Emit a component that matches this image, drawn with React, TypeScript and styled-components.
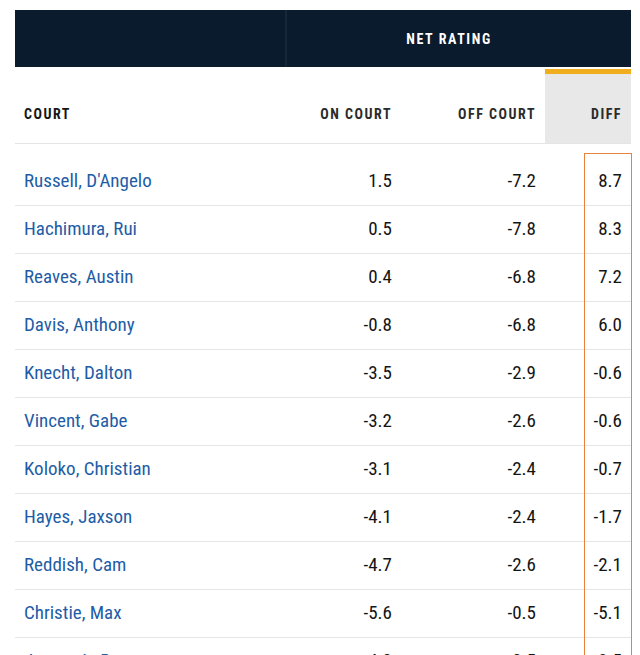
import React from "react";
import styled, { createGlobalStyle } from "styled-components";

const GlobalStyle = createGlobalStyle`
  html, body { margin: 0; padding: 0; background: #ffffff; }
  body { font-family: "Roboto Condensed", Roboto, "Liberation Sans", sans-serif; }
  * { box-sizing: border-box; }
`;

const Page = styled.div`
  width: 640px;
  height: 655px;
  overflow: hidden;
  padding: 10px 9px 0 15px;
`;

const COLS = "272px 114px 144px 86px";

const TopBar = styled.div`
  display: grid;
  grid-template-columns: 272px 1fr;
  height: 57px;
  background: #0a1b2d;
`;

const TopSpacer = styled.div`
  border-right: 2px solid #16273a;
`;

const GroupTitle = styled.div`
  display: flex;
  align-items: center;
  justify-content: center;
  padding-right: 20px;
  color: #ffffff;
  font-weight: 700;
  font-size: 14px;
  letter-spacing: 1.6px;
`;

const HeadRow = styled.div`
  display: grid;
  grid-template-columns: ${COLS};
  height: 76px;
  margin-top: 1px;
  border-bottom: 1px solid #e4e4e4;
`;

const HeadCell = styled.div<{ $align?: "left" | "right"; $active?: boolean }>`
  display: flex;
  align-items: center;
  justify-content: ${(p) => (p.$align === "left" ? "flex-start" : "flex-end")};
  padding: ${(p) => (p.$align === "left" ? "10px 0 0 9px" : "10px 9px 0 0")};
  font-weight: 700;
  font-size: 14px;
  letter-spacing: 1.5px;
  color: ${(p) => (p.$align === "left" ? "#161616" : "#2b2b2b")};
  background: ${(p) => (p.$active ? "#e8e8e8" : "transparent")};
  border-top: 5px solid ${(p) => (p.$active ? "#f0ae1e" : "transparent")};
  margin-top: 1px;
`;

const Body = styled.div`
  position: relative;
  padding-top: 14px;
`;

const Highlight = styled.div`
  position: absolute;
  top: 9px;
  right: -1px;
  bottom: -40px;
  width: 48px;
  border: 1.5px solid #e8813a;
  pointer-events: none;
`;

const Row = styled.div`
  display: grid;
  grid-template-columns: ${COLS};
  height: 48px;
  border-bottom: 1px solid #e6e6e6;
`;

const NameCell = styled.div`
  display: flex;
  align-items: center;
  padding-left: 9px;
  padding-bottom: 2px;
  font-size: 19px;
  color: #1e5da6;
  white-space: nowrap;
`;

const NumCell = styled.div`
  display: flex;
  align-items: center;
  justify-content: flex-end;
  padding-right: 9px;
  padding-bottom: 2px;
  font-size: 19px;
  color: #141414;
`;

type Player = { name: string; on: string; off: string; diff: string };

const players: Player[] = [
  { name: "Russell, D'Angelo", on: "1.5", off: "-7.2", diff: "8.7" },
  { name: "Hachimura, Rui", on: "0.5", off: "-7.8", diff: "8.3" },
  { name: "Reaves, Austin", on: "0.4", off: "-6.8", diff: "7.2" },
  { name: "Davis, Anthony", on: "-0.8", off: "-6.8", diff: "6.0" },
  { name: "Knecht, Dalton", on: "-3.5", off: "-2.9", diff: "-0.6" },
  { name: "Vincent, Gabe", on: "-3.2", off: "-2.6", diff: "-0.6" },
  { name: "Koloko, Christian", on: "-3.1", off: "-2.4", diff: "-0.7" },
  { name: "Hayes, Jaxson", on: "-4.1", off: "-2.4", diff: "-1.7" },
  { name: "Reddish, Cam", on: "-4.7", off: "-2.6", diff: "-2.1" },
  { name: "Christie, Max", on: "-5.6", off: "-0.5", diff: "-5.1" },
  { name: "James, LeBron", on: "-4.0", off: "-0.5", diff: "-3.5" },
];

export default function App() {
  return (
    <>
      <GlobalStyle />
      <Page>
        <TopBar>
          <TopSpacer />
          <GroupTitle>NET RATING</GroupTitle>
        </TopBar>
        <HeadRow>
          <HeadCell $align="left">COURT</HeadCell>
          <HeadCell>ON COURT</HeadCell>
          <HeadCell>OFF COURT</HeadCell>
          <HeadCell $active>DIFF</HeadCell>
        </HeadRow>
        <Body>
          {players.map((p) => (
            <Row key={p.name}>
              <NameCell>{p.name}</NameCell>
              <NumCell>{p.on}</NumCell>
              <NumCell>{p.off}</NumCell>
              <NumCell>{p.diff}</NumCell>
            </Row>
          ))}
          <Highlight />
        </Body>
      </Page>
    </>
  );
}
